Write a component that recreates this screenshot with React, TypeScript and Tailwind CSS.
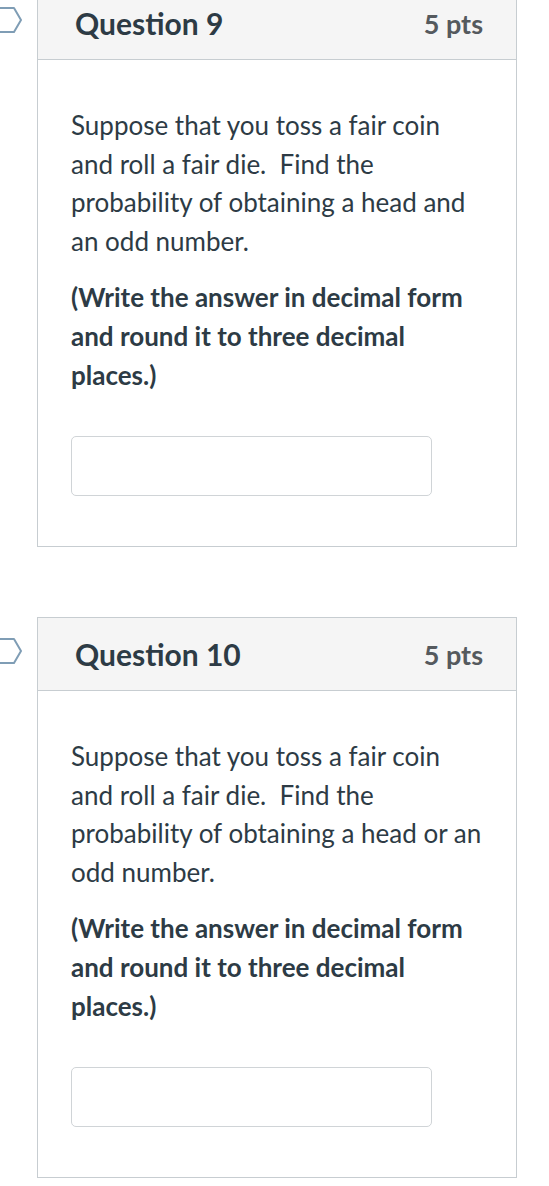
import React from "react";

type Question = {
  title: string;
  points: string;
  body: string;
};

const QUESTIONS: Question[] = [
  {
    title: "Question 9",
    points: "5 pts",
    body: "Suppose that you toss a fair coin and roll a fair die.\u00a0 Find the probability of obtaining a head and an odd number.",
  },
  {
    title: "Question 10",
    points: "5 pts",
    body: "Suppose that you toss a fair coin and roll a fair die.\u00a0 Find the probability of obtaining a head or an odd number.",
  },
];

function Flag() {
  return (
    <svg width="24" height="28" viewBox="0 0 24 28" className="block">
      <path
        d="M-4 2 H14 L21 14 L14 26 H-4"
        fill="none"
        stroke="#7f9db5"
        strokeWidth="2"
        strokeLinejoin="round"
      />
    </svg>
  );
}

function QuestionCard({ q, first }: { q: Question; first?: boolean }) {
  return (
    <div className={first ? "flex -mt-[14px]" : "flex mt-[70px]"}>
      <div className="w-[37px] shrink-0 pt-[20px]">
        <Flag />
      </div>
      <div className="w-[480px] shrink-0 border border-[#c7cdd1] bg-white">
        <div className="h-[73px] bg-[#f5f5f5] border-b border-[#c7cdd1] flex items-center justify-between pl-[37px] pr-[33px]">
          <h2 className="text-[30px] font-bold text-[#2d3b45] leading-none">{q.title}</h2>
          <span className="text-[27px] font-bold text-[#555a5e] leading-none">{q.points}</span>
        </div>
        <div className="pl-[33px] pt-[46px] pb-[50px] text-[#2d3b45]">
          <div className="w-[411px]">
            <p className="text-[26px] leading-[38.5px]">{q.body}</p>
            <p className="text-[26px] leading-[39px] font-bold mt-[18px]">
              (Write the answer in decimal form and round it to three decimal places.)
            </p>
          </div>
          <input
            type="text"
            className="block mt-[41px] w-[361px] h-[60px] rounded-[5px] border border-[#d0d4d7] bg-white"
          />
        </div>
      </div>
    </div>
  );
}

export default function App() {
  return (
    <div
      className="w-[549px] h-[1186px] overflow-hidden bg-white"
      style={{ fontFamily: "Lato, 'Noto Sans', sans-serif" }}
    >
      {QUESTIONS.map((q, i) => (
        <QuestionCard key={q.title} q={q} first={i === 0} />
      ))}
    </div>
  );
}
